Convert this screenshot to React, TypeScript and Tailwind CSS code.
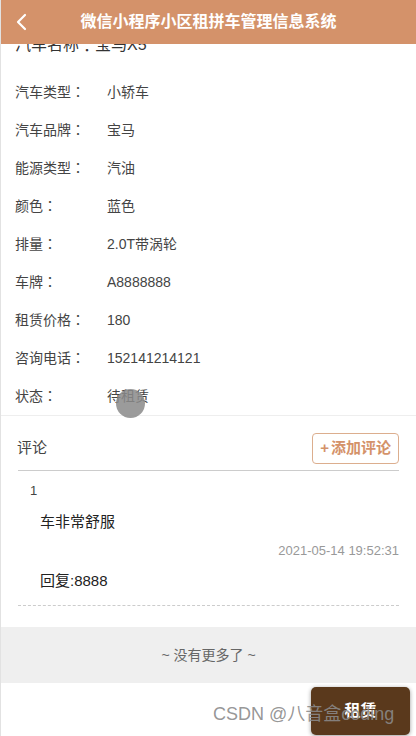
import React from "react";

const rows: [string, string][] = [
  ["汽车类型", "小轿车"],
  ["汽车品牌", "宝马"],
  ["能源类型", "汽油"],
  ["颜色", "蓝色"],
  ["排量", "2.0T带涡轮"],
  ["车牌", "A8888888"],
  ["租赁价格", "180"],
  ["咨询电话", "152141214121"],
  ["状态", "待租赁"],
];

const colon = { fontFamily: '"Noto Sans CJK TC", sans-serif' };

export default function App() {
  return (
    <div
      className="relative w-[416px] h-[736px] overflow-hidden bg-white border-l border-[#e2e2e2] text-[#333]"
      style={{ fontFamily: '"Liberation Sans", "Noto Sans CJK SC", sans-serif' }}
    >
      {/* scrolled content */}
      <div className="mt-[33px] h-[24px] pl-[14px] text-[16px] leading-[24px] text-[#333] flex items-center">
        汽车名称<span style={colon}>：</span>宝马X5
      </div>
      <div className="mt-[16px] border-b border-[#eeeeee]">
        {rows.map(([k, v]) => (
          <div key={k} className="flex items-center h-[38px] text-[14px] text-[#444]">
            <span className="w-[106px] pl-[14px]">
              {k}
              <span style={colon}>：</span>
            </span>
            <span>{v}</span>
          </div>
        ))}
      </div>

      <div className="mx-[17px]">
        <div className="flex items-center justify-between pt-[17px] pb-[6px] border-b border-[#cccccc]">
          <span className="text-[15px] text-[#444] -ml-[1px]">评论</span>
          <button className="h-[31px] px-[7px] rounded-[4px] border border-[#dcae8e] text-[#d4926a] text-[15px] font-bold flex items-center">
            <span className="mr-[2px]">+</span>添加评论
          </button>
        </div>
        <div className="border-b border-dashed border-[#cccccc] pb-[13px]">
          <div className="mt-[11px] pl-[12px] text-[13px] leading-[18px] text-[#444]">1</div>
          <div className="mt-[11px] pl-[22px] text-[15px] leading-[22px] text-[#222]">车非常舒服</div>
          <div className="mt-[9px] text-right text-[13px] leading-[18px] text-[#999]">2021-05-14 19:52:31</div>
          <div className="mt-[10px] pl-[22px] text-[15px] leading-[22px] text-[#222]">回复:8888</div>
        </div>
      </div>

      <div className="mt-[21px] h-[56px] bg-[#efefef] flex items-center justify-center text-[14px] text-[#666]">
        ~ 没有更多了 ~
      </div>

      {/* header overlay */}
      <div className="absolute top-0 left-0 right-0 h-[44px] bg-[#d4926a] flex items-center justify-center">
        <svg className="absolute left-[14px] top-[13px]" width="14" height="18" viewBox="0 0 14 18">
          <polyline points="10,2 3,9 10,16" fill="none" stroke="#ffffff" strokeWidth="2.2" strokeLinecap="round" strokeLinejoin="round" />
        </svg>
        <span className="text-white text-[16px] font-bold">微信小程序小区租拼车管理信息系统</span>
      </div>

      {/* touch indicator */}
      <div className="absolute left-[115px] top-[389px] w-[29px] h-[29px] rounded-full bg-[#8a8a8a]/85 blur-[0.5px]" />

      {/* rent button */}
      <button className="absolute right-[6px] top-[687px] w-[99px] h-[48px] rounded-[5px] bg-[#5a391c] text-white text-[16px] font-bold shadow-[0_1px_4px_rgba(0,0,0,0.4)]">
        租赁
      </button>

      {/* watermark */}
      <div className="absolute left-[212px] top-[702px] text-[18px] leading-[24px] text-[#8a8a8a]/90 pointer-events-none whitespace-nowrap">
        CSDN @八音盒coding
      </div>
    </div>
  );
}
